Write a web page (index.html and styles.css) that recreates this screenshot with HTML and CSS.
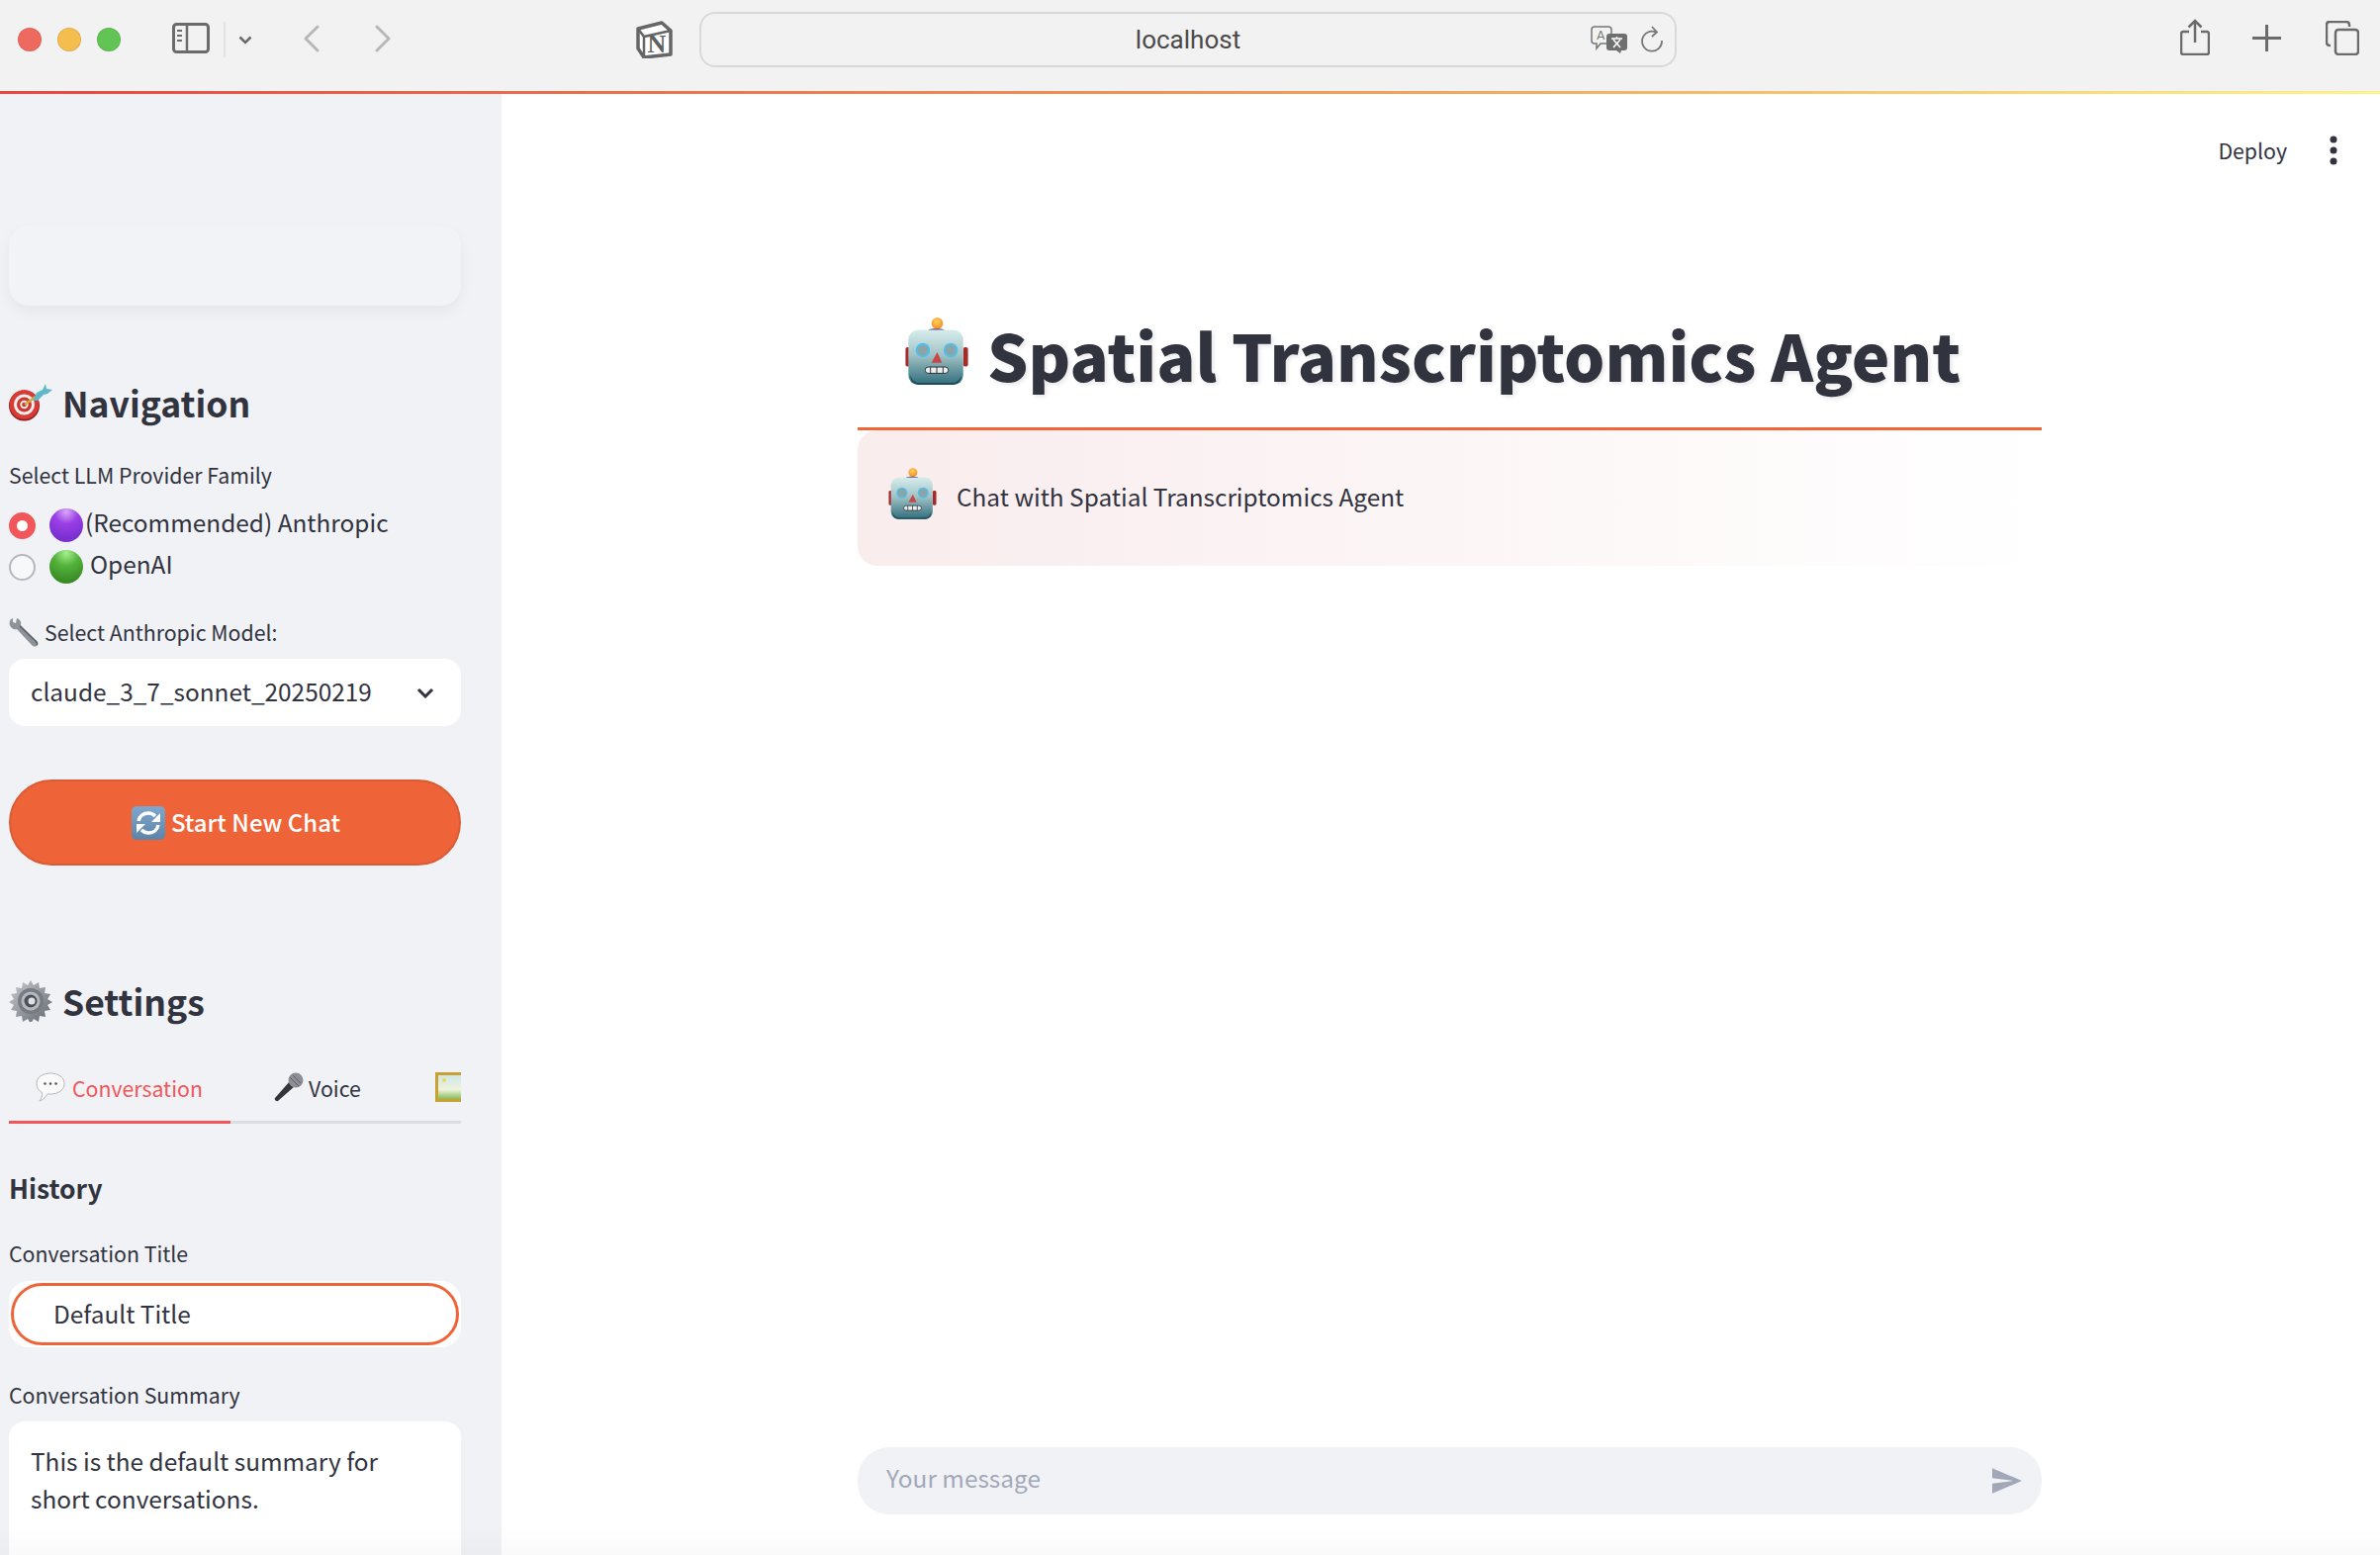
FILE: index.html
```html
<!DOCTYPE html>
<html lang="en">
<head>
  <meta charset="UTF-8">
  <title>Spatial Transcriptomics Agent</title>
  <link rel="stylesheet" href="styles.css">
</head>
<body>

  <svg class="sprites" xmlns="http://www.w3.org/2000/svg">
    <defs>
      <linearGradient id="robotFace" x1="0" y1="0" x2="0" y2="1">
        <stop offset="0" stop-color="#d6ecec"/>
        <stop offset="0.45" stop-color="#a3c4c6"/>
        <stop offset="1" stop-color="#2f6c7c"/>
      </linearGradient>
      <radialGradient id="robotBall" cx="0.45" cy="0.35" r="0.7">
        <stop offset="0" stop-color="#ffd35a"/>
        <stop offset="1" stop-color="#f0851e"/>
      </radialGradient>
      <radialGradient id="purpleBall" cx="0.5" cy="0.1" r="0.8">
        <stop offset="0" stop-color="#d9a8f5"/>
        <stop offset="0.45" stop-color="#9a3fe6"/>
        <stop offset="1" stop-color="#7a2fd0"/>
      </radialGradient>
      <radialGradient id="greenBall" cx="0.5" cy="0.1" r="0.85">
        <stop offset="0" stop-color="#a5f08e"/>
        <stop offset="0.45" stop-color="#52b23a"/>
        <stop offset="1" stop-color="#3a8a24"/>
      </radialGradient>
      <linearGradient id="gearBody" x1="0" y1="0" x2="1" y2="1">
        <stop offset="0" stop-color="#c9ccd2"/>
        <stop offset="1" stop-color="#60646c"/>
      </linearGradient>
      <linearGradient id="refreshBox" x1="0" y1="0" x2="0" y2="1">
        <stop offset="0" stop-color="#7fa6cc"/>
        <stop offset="1" stop-color="#5d84a8"/>
      </linearGradient>
      <linearGradient id="pictureSky" x1="0" y1="0" x2="0" y2="1">
        <stop offset="0" stop-color="#cfe6ec"/>
        <stop offset="0.6" stop-color="#eef3dc"/>
        <stop offset="1" stop-color="#86bb5c"/>
      </linearGradient>

      <symbol id="robot" viewBox="22 9 69 72">
        <rect x="24" y="41" width="5" height="20" rx="2" fill="#a52a28"/>
        <rect x="84" y="41" width="5" height="20" rx="2" fill="#a52a28"/>
        <circle cx="57" cy="16" r="6" fill="url(#robotBall)"/>
        <path d="M48 23c0-2 16-2 16 0c0 3-3 4-8 4s-8-1-8-4z" fill="#5d4a85"/>
        <rect x="27" y="23" width="57" height="57" rx="10" fill="url(#robotFace)"/>
        <path d="M29 70c0 6 4 10 10 10h33c6 0 10-4 10-10c-2 6-5 8-10 8H39c-5 0-8-2-10-8z" fill="#1f4a58"/>
        <circle cx="42" cy="44" r="6.500" fill="#8aa4a8" stroke="#4fc0ee" stroke-width="2"/>
        <circle cx="71" cy="44" r="6.500" fill="#8aa4a8" stroke="#4fc0ee" stroke-width="2"/>
        <path d="M57 46l-6 11h11z" fill="#c8484a"/>
        <rect x="44.500" y="61.500" width="24" height="6.500" rx="3" fill="#e8eeee" stroke="#2b3036"/>
        <path d="M50 61.500v6.500M56.500 61.500v6.500M63 61.500v6.500" stroke="#2b3036"/>
      </symbol>

      <symbol id="dart" viewBox="0 0 44 38">
        <circle cx="15.500" cy="22" r="15.500" fill="#8f2020"/>
        <circle cx="15.500" cy="21" r="14.800" fill="#d93a34"/>
        <circle cx="15.500" cy="21" r="10.500" fill="#f4efec"/>
        <circle cx="15.500" cy="21" r="7.500" fill="#d03430"/>
        <circle cx="15.500" cy="21" r="4.200" fill="#f4efec"/>
        <circle cx="15.500" cy="21" r="2.300" fill="#c93030"/>
        <path d="M16 21L27 13" stroke="#d1ac3f" stroke-width="2.500"/>
        <path d="M24 17l4-8l6-3l3-6l1 5l6 1l-5 4l-4 1l-6 6z" fill="#5fb8c8"/>
      </symbol>

      <symbol id="wrench" viewBox="0 0 30 30">
        <path d="M4 1C1 2 0 5 1 8c1 3 4 5 7 4l15 16c2 2 5 2 6 0c1-2 0-4-2-5L12 8c1-3-1-6-4-7l-1 5l-3-1z" fill="#8d9299"/>
        <path d="M11 9l16 15c1 1 2 3 1 4" fill="none" stroke="#5a5f66" stroke-width="1.500"/>
      </symbol>

      <symbol id="refresh" viewBox="0 0 34 34">
        <rect width="34" height="34" rx="5" fill="url(#refreshBox)"/>
        <path d="M7 15c1-5 5-8 10-8c3 0 5 1 7 3" fill="none" stroke="#fff" stroke-width="3.500"/>
        <path d="M29 7v9h-9z" fill="#fff"/>
        <path d="M27 19c-1 5-5 8-10 8c-3 0-5-1-7-3" fill="none" stroke="#fff" stroke-width="3.500"/>
        <path d="M5 27v-9h9z" fill="#fff"/>
      </symbol>

      <symbol id="gear" viewBox="0 1 44 42">
        <path d="M22 1l3 5l5-3l1 6l6-1l-1 6l6 1l-3 5l5 3l-5 3l3 5l-6 1l1 6l-6-1l-1 6l-5-3l-3 5l-3-5l-5 3l-1-6l-6 1l1-6l-6-1l3-5l-5-3l5-3l-3-5l6-1l-1-6l6 1l1-6l5 3z" fill="url(#gearBody)"/>
        <circle cx="22" cy="22" r="13" fill="#777b82"/>
        <circle cx="22" cy="22" r="9.500" fill="#b5b8bd"/>
        <circle cx="22" cy="22" r="6.500" fill="#4e5158"/>
        <circle cx="23" cy="22" r="3.500" fill="#dfe1e4"/>
      </symbol>

      <symbol id="bubble" viewBox="0 0 30 30">
        <path d="M15 1c8 0 14 4 14 10.500S23 22 15 22c-1 0-2 0-3-.2C10 25 8 28 4 29c2-3 3-5 2.500-8.500C3 18.500 1 15.500 1 11.500C1 5 7 1 15 1z" fill="#fafafa" stroke="#b5b8bd"/>
        <circle cx="9.500" cy="11.500" r="1.300" fill="#555"/>
        <circle cx="15" cy="11.500" r="1.300" fill="#555"/>
        <circle cx="20.500" cy="11.500" r="1.300" fill="#555"/>
      </symbol>

      <symbol id="mic" viewBox="0 0 30 30">
        <path d="M16 9L1 26c-1 1 1 4 3 3L21 14z" fill="#33353a"/>
        <circle cx="22" cy="8" r="7.500" fill="#8c8f95"/>
        <path d="M16 5l9 9M19 3l8 8" stroke="#5e6167"/>
      </symbol>

      <symbol id="picture" viewBox="0 0 30 30">
        <rect width="30" height="30" fill="#c9a12e"/>
        <rect x="3" y="3" width="24" height="24" fill="url(#pictureSky)"/>
        <circle cx="9" cy="8" r="2" fill="#f3d94a"/>
      </symbol>
    </defs>
  </svg>

  <header class="toolbar">
    <div class="lights">
      <span class="light red"></span>
      <span class="light yellow"></span>
      <span class="light green"></span>
    </div>
    <svg class="sidebar-icon" viewBox="0 0 38 31">
      <rect x="1.500" y="1.500" width="35" height="28" rx="3" fill="none" stroke="#6b6b6b" stroke-width="3"/>
      <path d="M15 2v27" stroke="#6b6b6b" stroke-width="2.500"/>
      <path d="M5 8h5M5 13h5M5 18h5" stroke="#6b6b6b" stroke-width="2"/>
    </svg>
    <span class="tool-sep"></span>
    <svg class="tool-chevron" viewBox="0 0 14 9"><path d="M1.500 1.500L7 7l5.500-5.500" fill="none" stroke="#6b6b6b" stroke-width="2.500"/></svg>
    <svg class="nav-arrow back" viewBox="0 0 16 28"><path d="M14 2L2 14l12 12" fill="none" stroke="#b8b8b8" stroke-width="3" stroke-linecap="round" stroke-linejoin="round"/></svg>
    <svg class="nav-arrow forward" viewBox="0 0 16 28"><path d="M2 2l12 12L2 26" fill="none" stroke="#b8b8b8" stroke-width="3" stroke-linecap="round" stroke-linejoin="round"/></svg>
    <svg class="notion" viewBox="0 0 37 38">
      <path d="M2 8L26 2l9 8v24L8 37l-6-9z" fill="#fff" stroke="#666" stroke-width="3.500" stroke-linejoin="round"/>
      <path d="M2 8l6 8l27-6M8 16v21" fill="none" stroke="#666" stroke-width="2.500"/>
      <text x="21" y="32" class="notion-n">N</text>
    </svg>
    <div class="url-bar">
      <span class="url-text">localhost</span>
      <span class="url-tools">
        <svg class="translate" viewBox="0 0 38 28">
          <path d="M4 1h14c2 0 3 1 3 3v11c0 2-1 3-3 3H10l-4 5v-5H4c-2 0-3-1-3-3V4c0-2 1-3 3-3z" fill="#f2f2f2" stroke="#777" stroke-width="1.500"/>
          <text x="6" y="14" class="translate-a">A</text>
          <path d="M19 8h15c2 0 3 1 3 3v11c0 2-1 3-3 3h-3l-1 3l-4-3h-7c-2 0-3-1-3-3V11c0-2 1-3 3-3z" fill="#6f6f6f"/>
          <path d="M21 13h11M26.500 11v2M23 22l7-8M30 22l-7-8" stroke="#fff" stroke-width="1.500"/>
        </svg>
        <svg class="reload" viewBox="0 0 23 28">
          <path d="M15 6.500A10 10 0 1 0 21 15" fill="none" stroke="#777" stroke-width="1.800"/>
          <path d="M11 1l5 5.500L11 11" fill="none" stroke="#777" stroke-width="1.800"/>
        </svg>
      </span>
    </div>
    <div class="tool-right">
      <svg class="share" viewBox="0 0 30 37">
        <path d="M9 13H3c-1 0-2 1-2 2v19c0 1 1 2 2 2h24c1 0 2-1 2-2V15c0-1-1-2-2-2h-6" fill="none" stroke="#6b6b6b" stroke-width="2.500"/>
        <path d="M15 2v22M8.500 8.500L15 2l6.500 6.500" fill="none" stroke="#6b6b6b" stroke-width="2.500"/>
      </svg>
      <svg class="plus" viewBox="0 0 29 27"><path d="M14.500 0v27M0 13.500h29" stroke="#6b6b6b" stroke-width="3"/></svg>
      <svg class="tabs-icon" viewBox="0 0 34 35">
        <path d="M5 25H4c-2 0-3-1-3-3V4c0-2 1-3 3-3h17c2 0 3 1 3 3v2" fill="none" stroke="#6b6b6b" stroke-width="2.500"/>
        <rect x="10" y="9" width="23" height="25" rx="3" fill="none" stroke="#6b6b6b" stroke-width="2.500"/>
      </svg>
    </div>
  </header>
  <div class="deco-line"></div>

  <div class="workspace">
    <aside class="sidebar">
      <div class="logo-card"></div>

      <h2 class="side-title nav-title"><svg class="emoji-head"><use href="#dart"/></svg>Navigation</h2>

      <div class="field-label provider-label">Select LLM Provider Family</div>
      <div class="radio-row">
        <span class="radio checked"></span>
        <svg class="ball" viewBox="0 0 34 34"><circle cx="17" cy="17" r="17" fill="url(#purpleBall)"/></svg>
        <span class="radio-text tight">(Recommended) Anthropic</span>
      </div>
      <div class="radio-row">
        <span class="radio"></span>
        <svg class="ball" viewBox="0 0 34 34"><circle cx="17" cy="17" r="17" fill="url(#greenBall)"/></svg>
        <span class="radio-text">OpenAI</span>
      </div>

      <div class="field-label model-label"><svg class="emoji-wrench"><use href="#wrench"/></svg>Select Anthropic Model:</div>
      <div class="select-box">
        <span class="select-value">claude_3_7_sonnet_20250219</span>
        <svg class="select-chevron" viewBox="0 0 18 11"><path d="M2 2l7 7l7-7" fill="none" stroke="#31333f" stroke-width="3"/></svg>
      </div>

      <button class="new-chat"><svg class="emoji-refresh"><use href="#refresh"/></svg><span class="new-chat-text">Start New Chat</span></button>

      <h2 class="side-title settings-title"><svg class="emoji-head"><use href="#gear"/></svg>Settings</h2>

      <div class="side-tabs">
        <div class="side-tab active"><svg class="tab-emoji"><use href="#bubble"/></svg>Conversation</div>
        <div class="side-tab voice"><svg class="tab-emoji"><use href="#mic"/></svg>Voice</div>
        <div class="side-tab pic"><svg class="tab-emoji"><use href="#picture"/></svg></div>
      </div>

      <h3 class="history-title">History</h3>

      <div class="field-label title-label">Conversation Title</div>
      <div class="title-input"><div class="title-inner"><span class="title-value">Default Title</span></div></div>

      <div class="field-label summary-label">Conversation Summary</div>
      <div class="summary-box">This is the default summary for short conversations.</div>
    </aside>

    <main class="main">
      <div class="main-top">
        <span class="deploy">Deploy</span>
        <svg class="kebab" viewBox="0 0 8 30">
          <circle cx="4" cy="4" r="3.500" fill="#31333f"/>
          <circle cx="4" cy="15" r="3.500" fill="#31333f"/>
          <circle cx="4" cy="26" r="3.500" fill="#31333f"/>
        </svg>
      </div>

      <div class="column">
        <h1 class="page-title"><svg class="title-robot"><use href="#robot"/></svg><span class="page-title-text">Spatial Transcriptomics Agent</span></h1>
        <div class="chat-msg">
          <svg class="msg-robot"><use href="#robot"/></svg>
          <span class="msg-text">Chat with Spatial Transcriptomics Agent</span>
        </div>

        <div class="chat-input">
          <span class="placeholder">Your message</span>
          <svg class="send" viewBox="2 3 21 18"><path d="M2.010 21L23 12 2.010 3 2 10l15 2-15 2z" fill="#a3a8b8"/></svg>
        </div>
      </div>
    </main>
  </div>

  <div class="bottom-fade"></div>

</body>
</html>
```

FILE: styles.css
```css
* {
  box-sizing: border-box;
}
html, body {
  margin: 0;
  height: 1572px;
  overflow: hidden;
}
body {
  font-family: "Noto Sans CJK SC", "Noto Sans", sans-serif;
  color: #31333f;
  background: #fff;
  position: relative;
}
.sprites {
  display: block;
  width: 0;
  height: 0;
}

/* browser bar */
.toolbar {
  height: 92px;
  background: #f2f2f2;
  display: flex;
  align-items: center;
  padding: 0 0 12px 18px;
}
.lights {
  display: flex;
  gap: 16px;
}
.light {
  width: 24px;
  height: 24px;
  border-radius: 50%;
  border: 1px solid rgba(0, 0, 0, 0.08);
}
.light.red { background: #ee6a5f; }
.light.yellow { background: #f5bd4f; }
.light.green { background: #61c454; }
.sidebar-icon {
  width: 38px;
  height: 31px;
  margin-left: 52px;
  margin-top: -3px;
}
.tool-sep {
  width: 2px;
  height: 36px;
  background: #e2e2e2;
  margin-left: 14px;
}
.tool-chevron {
  width: 14px;
  height: 9px;
  margin-left: 13px;
}
.nav-arrow {
  width: 16px;
  height: 28px;
  margin-top: -2px;
}
.nav-arrow.back { margin-left: 52px; }
.nav-arrow.forward { margin-left: 56px; }
.notion {
  width: 37px;
  height: 38px;
  margin-left: 248px;
}
.notion-n {
  font-family: "Liberation Serif", serif;
  font-size: 26px;
  font-weight: 700;
  fill: #5f5f5f;
  text-anchor: middle;
}
.translate-a {
  font-family: Roboto, sans-serif;
  font-size: 13px;
  fill: #777;
}
.url-bar {
  width: 988px;
  height: 56px;
  margin-left: 27px;
  border: 2px solid #d9d9d9;
  border-radius: 16px;
  display: flex;
  align-items: center;
  justify-content: center;
  position: relative;
}
.url-text {
  font-family: Roboto, sans-serif;
  font-size: 26px;
  color: #4a4a4a;
}
.url-tools {
  position: absolute;
  right: 11px;
  top: 12px;
  display: flex;
  gap: 13px;
}
.translate {
  width: 38px;
  height: 28px;
}
.reload {
  width: 23px;
  height: 28px;
}
.tool-right {
  display: flex;
  align-items: center;
  margin-left: 509px;
}
.share {
  width: 30px;
  height: 37px;
  margin-top: -5px;
}
.plus {
  width: 29px;
  height: 27px;
  margin-left: 43px;
  margin-top: -3px;
}
.tabs-icon {
  width: 34px;
  height: 35px;
  margin-left: 45px;
  margin-top: -3px;
}
.deco-line {
  height: 3px;
  background: linear-gradient(90deg, #e8473f, #f2a45a 60%, #fdf38a);
}

.workspace {
  display: flex;
  height: 1477px;
}

/* sidebar */
.sidebar {
  width: 507px;
  flex: none;
  background: #f0f2f6;
  padding: 133px 41px 0 9px;
  overflow: hidden;
}
.logo-card {
  height: 81px;
  border-radius: 20px;
  background: #f1f3f7;
  box-shadow: 0 6px 14px rgba(0, 0, 0, 0.05);
}
.side-title {
  margin: 0;
  font-size: 35.500px;
  font-weight: 600;
  line-height: 50px;
  display: flex;
  align-items: center;
}
.nav-title { margin-top: 73px; }
.settings-title { margin-top: 112px; }
.emoji-head {
  width: 44px;
  height: 42px;
  margin-right: 10px;
  flex: none;
}
.field-label {
  font-size: 21.300px;
  line-height: 30px;
  display: flex;
  align-items: center;
}
.provider-label { margin-top: 33px; }
.radio-row {
  height: 42px;
  display: flex;
  align-items: center;
  font-size: 24.400px;
}
.provider-label + .radio-row { margin-top: 15px; }
.radio {
  width: 27px;
  height: 27px;
  border-radius: 50%;
  background: #f7f8fa;
  border: 2px solid #b5b7bd;
  flex: none;
}
.radio.checked {
  background: #fff;
  border: 8px solid #f0565a;
}
.ball {
  width: 34px;
  height: 34px;
  margin-left: 14px;
  flex: none;
}
.radio-text {
  margin-left: 7px;
  padding-bottom: 7px;
}
.radio-text.tight { margin-left: 2px; }
.model-label { margin-top: 30px; }
.emoji-wrench {
  width: 30px;
  height: 30px;
  margin-right: 6px;
}
.select-box {
  height: 68px;
  margin-top: 12px;
  background: #fff;
  border-radius: 16px;
  display: flex;
  align-items: center;
  justify-content: space-between;
  padding: 0 27px 0 22px;
  font-size: 24.400px;
}
.select-value { padding-bottom: 3px; }
.select-chevron {
  width: 18px;
  height: 11px;
}
.new-chat {
  width: 100%;
  height: 87px;
  margin-top: 54px;
  padding: 0 0 0 2px;
  background: #ee6337;
  border: 2px solid #d85c36;
  border-radius: 44px;
  color: #fff;
  font-family: inherit;
  font-size: 24px;
  font-weight: 500;
  display: flex;
  align-items: center;
  justify-content: center;
}
.new-chat-text { padding-bottom: 3px; }
.emoji-refresh {
  width: 34px;
  height: 34px;
  margin-right: 6px;
}
.side-tabs {
  display: flex;
  height: 67px;
  margin-top: 32px;
  font-size: 21.300px;
  box-shadow: inset 0 -3px 0 #dcdde2;
  overflow: hidden;
}
.side-tab {
  display: flex;
  align-items: center;
  height: 67px;
  padding-bottom: 4px;
  border-bottom: 3px solid transparent;
  flex: none;
}
.side-tab.active {
  width: 224px;
  padding-left: 27px;
  color: #f0565a;
  border-bottom-color: #f0565a;
}
.side-tab.active .tab-emoji { margin-right: 7px; }
.side-tab.voice {
  width: 207px;
  padding-left: 44px;
}
.tab-emoji {
  width: 30px;
  height: 30px;
  margin-right: 5px;
  flex: none;
}
.history-title {
  margin: 45px 0 0;
  font-size: 26.400px;
  font-weight: 600;
  line-height: 40px;
}
.title-label { margin-top: 31px; }
.title-input {
  height: 67px;
  margin-top: 13px;
  background: #fff;
  border-radius: 20px;
  padding: 2px;
}
.title-inner {
  height: 63px;
  border: 3px solid #ee6337;
  border-radius: 32px;
  padding-left: 40px;
  font-size: 24.400px;
  display: flex;
  align-items: center;
}
.title-value { padding-bottom: 2px; }
.summary-label { margin-top: 33px; }
.summary-box {
  height: 200px;
  margin-top: 12px;
  background: #fff;
  border-radius: 16px;
  padding: 21px 30px 21px 22px;
  font-size: 24.400px;
  line-height: 38px;
}

/* main area */
.main {
  flex: 1;
  padding-left: 360px;
  position: relative;
}
.main-top {
  position: absolute;
  right: 43px;
  top: 41px;
  display: flex;
  align-items: center;
  gap: 43px;
  font-size: 21.300px;
}
.kebab {
  width: 8px;
  height: 30px;
}
.column {
  width: 1197px;
  height: 100%;
  display: flex;
  flex-direction: column;
}
.page-title {
  margin: 0;
  height: 340px;
  padding: 183px 0 0 46px;
  border-bottom: 3px solid #f06435;
  font-size: 65px;
  font-weight: 900;
  line-height: 84px;
  white-space: nowrap;
  text-shadow: 2px 2px 4px rgba(0, 0, 0, 0.1);
  display: flex;
  align-items: center;
}
.page-title-text { padding-top: 6px; }
.title-robot {
  width: 68px;
  height: 70px;
  margin-right: 17px;
  flex: none;
}
.chat-msg {
  height: 137px;
  border-radius: 20px;
  background: linear-gradient(90deg, #f9eced, #fff);
  display: flex;
  align-items: center;
  padding: 0 0 9px 30px;
  font-size: 24.400px;
}
.msg-text { padding-top: 5px; }
.msg-robot {
  width: 51px;
  height: 54px;
  margin-right: 19px;
  flex: none;
}
.chat-input {
  height: 68px;
  margin-top: 891px;
  background: #f0f2f6;
  border-radius: 32px;
  display: flex;
  align-items: center;
  justify-content: space-between;
  padding: 0 20px 0 29px;
  font-size: 24.400px;
  color: #a3a8b8;
}
.placeholder { padding-bottom: 7px; }
.send {
  width: 30px;
  height: 26px;
}
.bottom-fade {
  position: absolute;
  left: 0;
  right: 0;
  bottom: 0;
  height: 30px;
  background: linear-gradient(rgba(0, 0, 0, 0), rgba(0, 0, 0, 0.025));
}
```
